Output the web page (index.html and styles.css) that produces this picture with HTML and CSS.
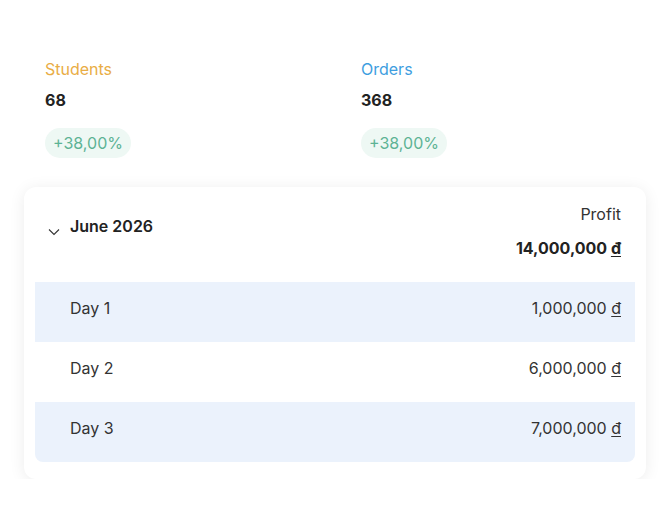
FILE: index.html
```html
<!DOCTYPE html>
<html>
<head>
<meta charset="utf-8">
<link rel="stylesheet" href="styles.css">
</head>
<body>
<div class="page">
  <div class="stats">
    <div class="stat">
      <div class="stat-label students">Students</div>
      <div class="stat-value">68</div>
      <div class="badge">+38,00%</div>
    </div>
    <div class="stat">
      <div class="stat-label orders">Orders</div>
      <div class="stat-value">368</div>
      <div class="badge">+38,00%</div>
    </div>
  </div>
  <div class="card">
    <div class="card-head">
      <div class="month">
        <svg class="chev" width="12" height="8" viewBox="0 0 12 8"><path d="M1 1.5 L6 6.5 L11 1.5" fill="none" stroke="#333" stroke-width="1.1"/></svg>
        <span>June 2026</span>
      </div>
      <div class="profit">
        <div class="profit-label">Profit</div>
        <div class="profit-value">14,000,000 <u>đ</u></div>
      </div>
    </div>
    <div class="rows">
      <div class="row alt"><span>Day 1</span><span>1,000,000 <u>đ</u></span></div>
      <div class="row"><span>Day 2</span><span>6,000,000 <u>đ</u></span></div>
      <div class="row alt last"><span>Day 3</span><span>7,000,000 <u>đ</u></span></div>
    </div>
  </div>
</div>
</body>
</html>
```
FILE: styles.css
```css
* { box-sizing: border-box; }
html, body { margin: 0; padding: 0; background: #fff; }
body { font-family: Inter, "Noto Sans", sans-serif; color: #2b2b2b; }
.page { padding: 58px 24px 0 24px; }
.stats { display: flex; padding-left: 21px; }
.stat { width: 316px; flex-shrink: 0; display: flex; flex-direction: column; align-items: flex-start; }
.stat-label { font-size: 16px; line-height: 22px; }
.students { color: #e9ad45; }
.orders { color: #3e9ee0; }
.stat-value { font-size: 16px; font-weight: 700; line-height: 22px; margin-top: 9px; color: #222; }
.badge { margin-top: 17px; height: 30px; padding: 0 8px; border-radius: 15px; background: #eef8f4; color: #5db394; font-size: 16px; line-height: 30px; }
.card { margin-top: 29px; width: 622px; background: #fff; border-radius: 12px; box-shadow: 0 2px 16px rgba(0,0,0,0.08); padding: 0 11px 17px 11px; }
.card-head { height: 95px; display: flex; justify-content: space-between; padding: 16px 14px 0 13px; }
.month { display: flex; align-items: center; height: 46px; gap: 10px; font-size: 16px; font-weight: 600; color: #222; }
.chev { margin-top: 12px; }
.profit { text-align: right; }
.profit-label { font-size: 16px; line-height: 22px; color: #333; }
.profit-value { font-size: 16px; font-weight: 700; line-height: 22px; margin-top: 12px; color: #222; }
u { text-decoration-thickness: 1px; text-underline-offset: 2px; }
.rows { display: flex; flex-direction: column; }
.row { height: 60px; display: flex; justify-content: space-between; align-items: center; padding: 0 14px 8px 35px; font-size: 16px; color: #333; }
.row.alt { background: #ebf2fc; }
.row.last { border-radius: 0 0 8px 8px; }
```
